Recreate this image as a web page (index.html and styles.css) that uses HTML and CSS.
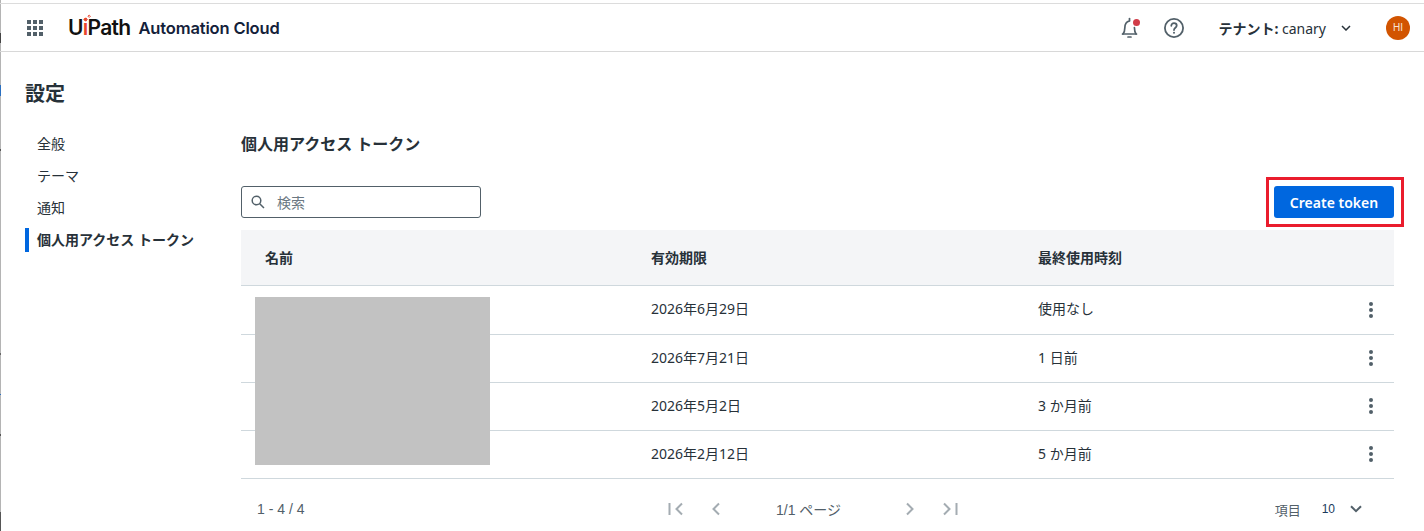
FILE: index.html
```html
<!DOCTYPE html>
<html lang="ja">
<head>
  <meta charset="UTF-8">
  <meta name="viewport" content="width=device-width, initial-scale=1.0">
  <title>設定</title>
  <link rel="stylesheet" href="styles.css">
</head>
<body>
  <div class="header">
    <svg class="apps-icon" width="16" height="16" viewBox="0 0 16 16" fill="#526069">
      <rect x="0" y="0" width="4" height="4"/><rect x="6" y="0" width="4" height="4"/><rect x="12" y="0" width="4" height="4"/>
      <rect x="0" y="6" width="4" height="4"/><rect x="6" y="6" width="4" height="4"/><rect x="12" y="6" width="4" height="4"/>
      <rect x="0" y="12" width="4" height="4"/><rect x="6" y="12" width="4" height="4"/><rect x="12" y="12" width="4" height="4"/>
    </svg>
    <div class="logo">
      <span class="logo-mark">U<span class="logo-i">i<svg class="logo-spark" width="9" height="9" viewBox="0 0 9 9" fill="none" stroke="#e8452c" stroke-width="1"><path d="M1 5.500l1.700-1.700 1.700 1.700-1.700 1.700z"/><path d="M5 2.200l1.200-1.200 1.200 1.200-1.200 1.200z"/></svg></span>Path</span>
      <span class="logo-name">Automation Cloud</span>
    </div>
    <div class="header-right">
      <span class="bell">
        <svg width="24" height="24" viewBox="0 0 24 24" fill="none" stroke="#526069" stroke-width="1.700" stroke-linecap="round">
          <path d="M5.500 18h14"/>
          <path d="M6 18c1.300-1.500 1.800-3.200 1.800-6 0-3.600 1.900-6.500 4.700-7"/>
          <path d="M12.500 2.500v2"/>
          <path d="M17.400 11.500c.1 3 .4 5 1.600 6.500"/>
          <path d="M11 21h3"/>
        </svg>
        <span class="bell-dot"></span>
      </span>
      <svg class="help-icon" width="24" height="24" viewBox="0 0 24 24" fill="none" stroke="#526069" stroke-width="1.800">
        <circle cx="12" cy="12" r="9.100"/>
        <path d="M9.300 9.800c0-1.600 1.200-2.600 2.700-2.600s2.700 1 2.700 2.400c0 2.100-2.700 2.200-2.700 4.400" stroke-linecap="round"/>
        <circle cx="12" cy="16.700" r="1" fill="#526069" stroke="none"/>
      </svg>
      <div class="tenant"><b>テナント:</b> canary</div>
      <svg class="tenant-caret" width="10" height="6" viewBox="0 0 10 6" fill="none" stroke="#273139" stroke-width="1.500"><path d="M1 1l4 4 4-4"/></svg>
      <div class="avatar">HI</div>
    </div>
  </div>

  <div class="main">
    <h1 class="page-title">設定</h1>
    <div class="columns">
      <div class="sidebar">
        <div class="nav-item">全般</div>
        <div class="nav-item">テーマ</div>
        <div class="nav-item">通知</div>
        <div class="nav-item active">個人用アクセス トークン</div>
      </div>

      <div class="content">
        <h2 class="section-title">個人用アクセス トークン</h2>

        <div class="toolbar">
          <div class="search">
            <svg width="16" height="16" viewBox="0 0 16 16" fill="none" stroke="#526069" stroke-width="1.500"><circle cx="6.500" cy="6.500" r="4.300"/><path d="M9.700 9.700l4.300 4.300"/></svg>
            <span class="search-text">検索</span>
          </div>
          <div class="create-wrap">
            <button class="button">Create token</button>
          </div>
        </div>

        <div class="table">
          <div class="row head">
            <div class="cell-name">名前</div>
            <div>有効期限</div>
            <div>最終使用時刻</div>
            <div></div>
          </div>
          <div class="row">
            <div class="cell-name"></div>
            <div>2026年6月29日</div>
            <div>使用なし</div>
            <div class="kebab"><i></i><i></i><i></i></div>
          </div>
          <div class="row">
            <div class="cell-name"></div>
            <div>2026年7月21日</div>
            <div>1 日前</div>
            <div class="kebab"><i></i><i></i><i></i></div>
          </div>
          <div class="row">
            <div class="cell-name"></div>
            <div>2026年5月2日</div>
            <div>3 か月前</div>
            <div class="kebab"><i></i><i></i><i></i></div>
          </div>
          <div class="row">
            <div class="cell-name"></div>
            <div>2026年2月12日</div>
            <div>5 か月前</div>
            <div class="kebab"><i></i><i></i><i></i></div>
          </div>
          <div class="redacted"></div>
        </div>

        <div class="pager">
          <div class="pager-count">1 - 4 / 4</div>
          <div class="pager-nav">
            <svg width="16" height="14" viewBox="0 0 16 14" fill="none" stroke="#a4acb2" stroke-width="2"><path d="M1.500 1v12M14 1.500L8.500 7l5.500 5.500"/></svg>
            <svg class="pager-prev" width="10" height="14" viewBox="0 0 10 14" fill="none" stroke="#a4acb2" stroke-width="2"><path d="M8 1.500L2.500 7 8 12.500"/></svg>
            <span class="pager-page">1/1 ページ</span>
            <svg class="pager-next" width="10" height="14" viewBox="0 0 10 14" fill="none" stroke="#a4acb2" stroke-width="2"><path d="M2 1.500L7.500 7 2 12.500"/></svg>
            <svg width="16" height="14" viewBox="0 0 16 14" fill="none" stroke="#a4acb2" stroke-width="2"><path d="M14.500 1v12M2 1.500L7.500 7 2 12.500"/></svg>
          </div>
          <div class="pager-size">
            <span class="pager-size-label">項目</span>
            <span class="pager-size-num">10</span>
            <svg width="12" height="8" viewBox="0 0 12 8" fill="none" stroke="#526069" stroke-width="2"><path d="M1 1.200l5 5 5-5"/></svg>
          </div>
        </div>
      </div>
    </div>
  </div>
</body>
</html>
```

FILE: styles.css
```css
html, body {
  height: 100%;
}

body {
  margin: 0;
  padding-top: 3px;
  box-sizing: border-box;
  overflow: hidden;
  color: #273139;
  font-family: "Noto Sans", "Noto Sans CJK JP", sans-serif;
  font-size: 14px;
  background: linear-gradient(to bottom,
    #b4b4b4 33px, #444 33px, #444 43px, #b4b4b4 43px,
    #b4b4b4 85px, #2a6fc0 85px, #2a6fc0 96px, #b4b4b4 96px,
    #b4b4b4 149px, #555 149px, #555 151px, #b4b4b4 151px,
    #b4b4b4 353px, #666 353px, #666 355px, #b4b4b4 355px,
    #b4b4b4 394px, #2a6fc0 394px, #2a6fc0 395px, #b4b4b4 395px,
    #b4b4b4 434px, #555 434px, #555 436px, #b4b4b4 436px,
    #b4b4b4 512px, #555 512px) left top / 1px 100% no-repeat;
}

.header {
  height: 47px;
  display: flex;
  align-items: center;
  padding-left: 27px;
  padding-right: 14px;
  border-top: 1px solid #dcdcdc;
  border-bottom: 1px solid #d8d8d8;
}

.apps-icon {
  flex-shrink: 0;
}

.logo {
  display: flex;
  align-items: center;
  margin-left: 25px;
}

.logo-mark {
  font-family: "Inter", sans-serif;
  font-size: 21px;
  font-weight: 600;
  letter-spacing: -0.7px;
  color: #111;
}

.logo-i {
  position: relative;
  color: #e8452c;
}

.logo-spark {
  position: absolute;
  left: 0;
  top: -1px;
}

.logo-name {
  margin-left: 8px;
  font-family: "Inter", sans-serif;
  font-size: 16.500px;
  font-weight: 600;
  letter-spacing: -0.15px;
  color: #13213a;
}

.header-right {
  margin-left: auto;
  display: flex;
  align-items: center;
}

.bell {
  position: relative;
  display: flex;
  width: 24px;
  height: 24px;
}

.bell-dot {
  position: absolute;
  top: 3px;
  right: 1px;
  width: 7px;
  height: 7px;
  border-radius: 50%;
  background: #d13c48;
}

.help-icon {
  margin-left: 21px;
}

.tenant {
  margin-left: 32px;
  font-size: 14px;
  color: #273139;
}

.tenant b {
  font-weight: 700;
}

.tenant-caret {
  margin-left: 15px;
}

.avatar {
  margin-left: 35px;
  width: 24px;
  height: 24px;
  border-radius: 50%;
  background: #d25400;
  color: #f6e3d6;
  font-family: "Liberation Sans", sans-serif;
  font-size: 10px;
  text-align: center;
  line-height: 24px;
}

.main {
  padding: 26px 30px 0 25px;
}

.page-title {
  margin: 0;
  font-size: 20px;
  font-weight: 700;
  line-height: 32px;
}

.columns {
  display: flex;
  margin-top: 22px;
}

.sidebar {
  width: 216px;
  flex-shrink: 0;
}

.nav-item {
  height: 24px;
  margin-bottom: 8px;
  padding-left: 12px;
  line-height: 24px;
  white-space: nowrap;
}

.nav-item.active {
  font-weight: 700;
  border-left: 4px solid #0067df;
  padding-left: 8px;
}

.content {
  flex: 1;
  min-width: 0;
}

.section-title {
  margin: 0;
  font-size: 16px;
  font-weight: 700;
  line-height: 24px;
}

.toolbar {
  display: flex;
  justify-content: space-between;
  align-items: center;
  margin-top: 30px;
}

.search {
  box-sizing: border-box;
  width: 240px;
  height: 32px;
  display: flex;
  align-items: center;
  padding-left: 8px;
  border: 1px solid #526069;
  border-radius: 3px;
}

.search-text {
  margin-left: 11px;
  color: #6b7882;
}

.create-wrap {
  position: relative;
}

/* 赤枠 */
.create-wrap::after {
  content: "";
  position: absolute;
  left: -8px;
  right: -10px;
  top: -9px;
  bottom: -9px;
  border: 3px solid #ea1c2d;
  pointer-events: none;
}

.button {
  display: block;
  width: 120px;
  height: 32px;
  padding: 0;
  border: none;
  border-radius: 3px;
  background: #0067df;
  color: #fff;
  font-family: "Noto Sans", sans-serif;
  font-size: 14px;
  font-weight: 600;
}

.table {
  position: relative;
  margin-top: 12px;
}

.row {
  display: grid;
  grid-template-columns: 410px 387px 1fr 25px;
  align-items: center;
  height: 43px;
  padding-bottom: 4px;
  border-bottom: 1px solid #cfd8dd;
  font-size: 14px;
}

.row.head {
  height: 54px;
  padding-bottom: 1px;
  background: #f4f5f7;
  font-weight: 700;
}

.row.head + .row {
  height: 44px;
}

.cell-name {
  padding-left: 24px;
}

.kebab {
  display: flex;
  flex-direction: column;
  align-items: flex-start;
  gap: 2px;
  margin-top: 3px;
}

.kebab i {
  display: block;
  width: 4px;
  height: 4px;
  border-radius: 50%;
  background: #526069;
}

/* 名前を隠すグレーの箱 */
.redacted {
  position: absolute;
  left: 14px;
  top: 67px;
  width: 235px;
  height: 168px;
  background: #c2c2c2;
}

.pager {
  display: flex;
  align-items: center;
  height: 60px;
  font-family: "Liberation Sans", "Noto Sans CJK JP", sans-serif;
  font-size: 14px;
  color: #526069;
}

.pager-count {
  width: 427px;
  padding-left: 16px;
  box-sizing: border-box;
}

.pager-nav {
  display: flex;
  align-items: center;
}

.pager-prev {
  margin-left: 27px;
}

.pager-page {
  margin-left: 55px;
  width: 129px;
}

.pager-next {
  margin-right: 27px;
}

.pager-size {
  margin-left: auto;
  margin-right: 32px;
  display: flex;
  align-items: center;
}

.pager-size-label {
  font-size: 13px;
}

.pager-size-num {
  margin-left: 21px;
  margin-right: 15px;
  font-size: 12px;
  color: #1b3a5c;
}
```
